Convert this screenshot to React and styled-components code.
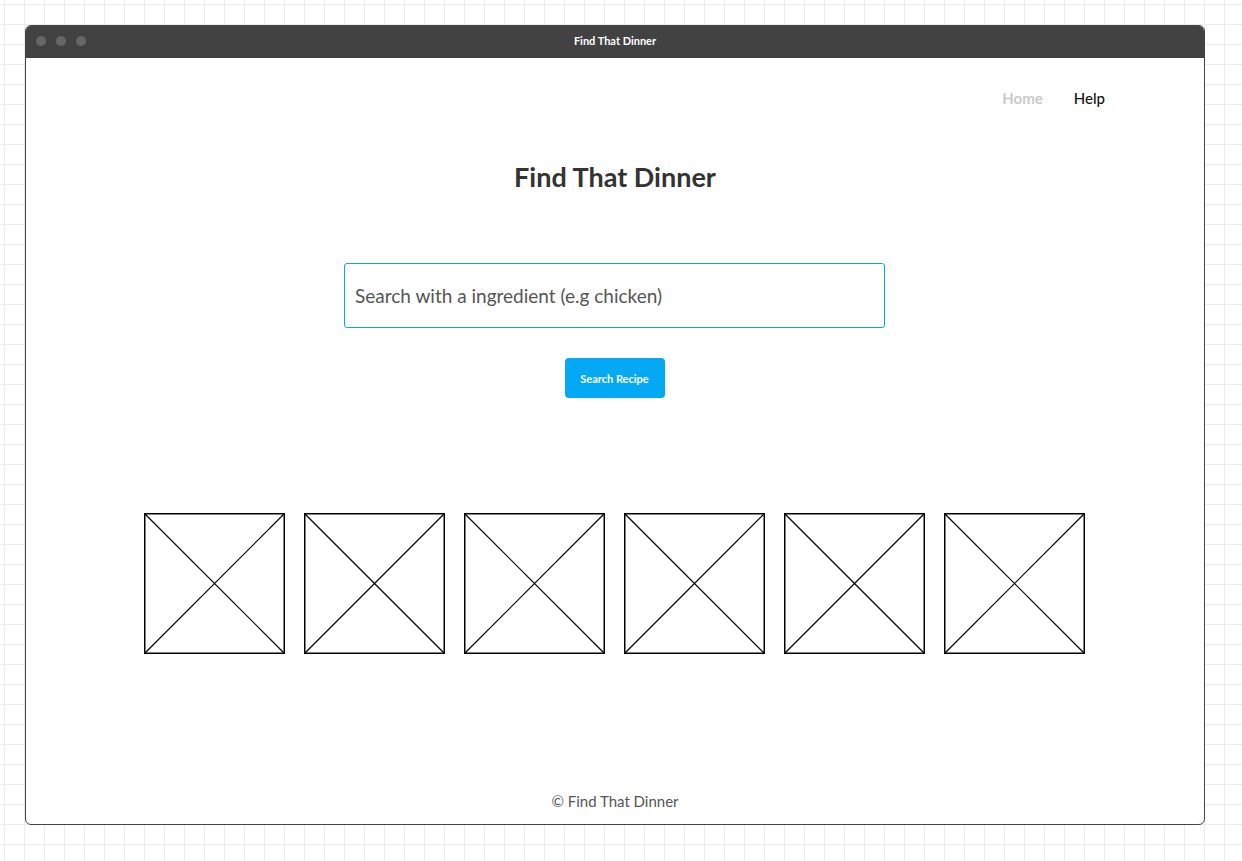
import React from 'react'
import styled, {createGlobalStyle} from 'styled-components'

const GlobalStyle = createGlobalStyle`
	html, body {
		margin: 0;
		padding: 0;
	}
	body {
		width: 1242px;
		height: 861px;
		overflow: hidden;
		font-family: 'Lato', 'Noto Sans', sans-serif;
		background-color: #fff;
		background-image:
			linear-gradient(to right, #ececec 1px, transparent 1px),
			linear-gradient(to bottom, #ececec 1px, transparent 1px);
		background-size: 20px 20px;
		background-position: 4px 4px;
	}
`

// Window frame

const Window = styled.div`
	margin: 25px 0 0 25px;
	width: 1180px;
	height: 800px;
	box-sizing: border-box;
	border: 1px solid #444;
	border-radius: 6px;
	background: #fff;
	overflow: hidden;
	display: flex;
	flex-direction: column;
`

const TitleBar = styled.div`
	flex: 0 0 32px;
	box-sizing: border-box;
	background: #424242;
	display: flex;
	align-items: center;
	position: relative;
	padding: 0 0 3px 10px;
	gap: 10px;
`

const Dot = styled.span`
	width: 10px;
	height: 10px;
	border-radius: 50%;
	background: #676767;
`

const WindowTitle = styled.div`
	position: absolute;
	left: 0;
	right: 0;
	top: 0;
	bottom: 3px;
	display: flex;
	align-items: center;
	justify-content: center;
	color: #fff;
	font-size: 11px;
	font-weight: 700;
`

// Page

const Page = styled.div`
	flex: 1;
	display: flex;
	flex-direction: column;
	align-items: center;
`

const Nav = styled.nav`
	align-self: stretch;
	display: flex;
	justify-content: flex-end;
	gap: 31px;
	padding: 30px 99px 0 0;
	height: 20px;
`

const NavLink = styled.a`
	font-size: 15px;
	line-height: 20px;
	color: ${p => (p.active ? '#c9c9c9' : '#111')};
	font-weight: ${p => (p.active ? 700 : 500)};
	text-decoration: none;
`

const Heading = styled.h1`
	margin: 52px 0 0;
	font-size: 27px;
	line-height: 34px;
	font-weight: 700;
	color: #333;
`

const SearchInput = styled.input`
	margin: 69px 1px 0 0;
	width: 541px;
	height: 65px;
	box-sizing: border-box;
	border: 1px solid #0aa6ee;
	border-radius: 3px;
	padding: 0 10px;
	font-family: inherit;
	font-size: 19px;
	color: #444;
	outline: none;
	&::placeholder {
		color: #555;
	}
`

const Button = styled.button`
	margin: 30px 1px 0 0;
	width: 100px;
	height: 40px;
	border: none;
	border-radius: 4px;
	background: #03a9f4;
	color: #fff;
	font-family: inherit;
	font-size: 11px;
	font-weight: 700;
	cursor: pointer;
`

const Gallery = styled.div`
	margin: 115px 1px 0 0;
	display: flex;
	gap: 19px;
`

const Thumb = styled.svg`
	display: block;
	width: 141px;
	height: 141px;
`

const Footer = styled.footer`
	margin-top: auto;
	padding-bottom: 14px;
	font-size: 15px;
	color: #555;
`

const Placeholder = () => (
	<Thumb viewBox="0 0 141 141">
		<rect x="0.75" y="0.75" width="139.5" height="139.5" fill="#fff" stroke="#000" strokeWidth="1.5" />
		<line x1="1" y1="1" x2="140" y2="140" stroke="#000" strokeWidth="1.2" />
		<line x1="140" y1="1" x2="1" y2="140" stroke="#000" strokeWidth="1.2" />
	</Thumb>
)

const App = () => (
	<>
		<GlobalStyle />
		<Window>
			<TitleBar>
				<Dot />
				<Dot />
				<Dot />
				<WindowTitle>Find That Dinner</WindowTitle>
			</TitleBar>
			<Page>
				<Nav>
					<NavLink active href="#">Home</NavLink>
					<NavLink href="#">Help</NavLink>
				</Nav>
				<Heading>Find That Dinner</Heading>
				<SearchInput placeholder="Search with a ingredient (e.g chicken)" />
				<Button>Search Recipe</Button>
				<Gallery>
					{[0, 1, 2, 3, 4, 5].map(i => (
						<Placeholder key={i} />
					))}
				</Gallery>
				<Footer>© Find That Dinner</Footer>
			</Page>
		</Window>
	</>
)

export default App
